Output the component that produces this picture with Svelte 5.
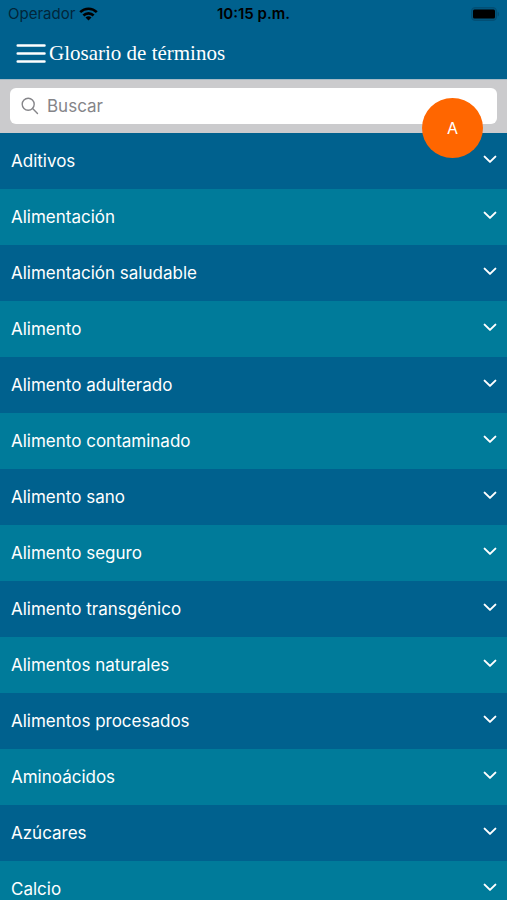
<script>
  const terms = [
    'Aditivos',
    'Alimentación',
    'Alimentación saludable',
    'Alimento',
    'Alimento adulterado',
    'Alimento contaminado',
    'Alimento sano',
    'Alimento seguro',
    'Alimento transgénico',
    'Alimentos naturales',
    'Alimentos procesados',
    'Aminoácidos',
    'Azúcares',
    'Calcio'
  ];

  let query = $state('');
  let open = $state('');

  const shown = $derived(
    terms.filter((term) => term.toLowerCase().includes(query.toLowerCase()))
  );
</script>

<div class="app">
  <header>
    <div class="status">
      <span class="carrier">
        Operador
        <svg width="19" height="14" viewBox="0 0 19 14" aria-hidden="true">
          <g fill="none" stroke="#000" stroke-width="2.6">
            <path d="M1.2 5.1a11.8 11.8 0 0 1 16.6 0" />
            <path d="M4.4 8.5a7.2 7.2 0 0 1 10.2 0" />
          </g>
          <path d="M6.5 10.6a4.3 4.3 0 0 1 6 0L9.5 13.6z" />
        </svg>
      </span>
      <span class="time">10:15 p.m.</span>
      <svg class="battery" width="28" height="14" viewBox="0 0 28 14" aria-hidden="true">
        <rect x="0.5" y="0.5" width="25" height="13" rx="3.5" fill="#02567e" stroke="#024f75" />
        <rect x="2" y="2.5" width="22" height="9" rx="1.5" />
        <path d="M26.6 4.5a2.8 2.8 0 0 1 0 5z" fill="#024f75" />
      </svg>
    </div>
    <div class="bar">
      <button class="menu" aria-label="Menú">
        <svg width="30" height="19" viewBox="0 0 30 19" aria-hidden="true">
          <path d="M1.7 1.5h26.8M1.7 9.5h26.8M1.7 17.5h26.8" stroke="#fff" stroke-width="2.5" stroke-linecap="round" />
        </svg>
      </button>
      <h1>Glosario de términos</h1>
    </div>
  </header>

  <div class="search">
    <label class="field">
      <svg width="18" height="18" viewBox="0 0 18 18" aria-hidden="true">
        <g fill="none" stroke="#858589" stroke-width="1.4" stroke-linecap="round">
          <circle cx="7.2" cy="7.2" r="6" />
          <path d="M11.6 11.6l4.9 4.9" />
        </g>
      </svg>
      <input type="text" placeholder="Buscar" aria-label="Buscar" bind:value={query} />
    </label>
    <button class="letter">A</button>
  </div>

  <ul>
    {#each shown as term (term)}
      <li>
        <button
          class="term"
          aria-expanded={open === term}
          onclick={() => (open = open === term ? '' : term)}
        >
          <span>{term}</span>
          <svg width="14" height="9" viewBox="0 0 14 9" aria-hidden="true">
            <path d="M1.6 1.6L7 6.9l5.4-5.3" fill="none" stroke="#fff" stroke-width="2" stroke-linecap="round" stroke-linejoin="round" />
          </svg>
        </button>
      </li>
    {/each}
  </ul>
</div>

<style>
  .app {
    display: flex;
    flex-direction: column;
    height: 100vh;
    overflow: hidden;
    background: #00618e;
    color: #fff;
    font-family: Inter, 'Liberation Sans', sans-serif;
  }

  button {
    margin: 0;
    padding: 0;
    border: 0;
    background: none;
    color: inherit;
    font: inherit;
    cursor: pointer;
  }

  svg {
    display: block;
    flex: none;
  }

  header {
    flex: none;
    background: #00618e;
  }

  .status {
    display: grid;
    grid-template-columns: 1fr auto 1fr;
    align-items: center;
    height: 27px;
    padding: 0 8px;
    color: #000;
    font-size: 15px;
  }

  .carrier {
    display: flex;
    align-items: center;
    gap: 4px;
    color: #02263a;
  }

  .time {
    font-weight: 600;
  }

  .battery {
    justify-self: end;
  }

  .bar {
    display: flex;
    align-items: center;
    gap: 3px;
    height: 52px;
    padding: 0 16px;
  }

  h1 {
    margin: 0;
    font-family: 'Liberation Serif', serif;
    font-size: 21px;
    font-weight: 400;
    line-height: 24px;
  }

  .search {
    position: relative;
    flex: none;
    padding: 8px 10px 9px;
    border-top: 1px solid #a5bac6;
    background: #cbcbcd;
  }

  .field {
    display: flex;
    align-items: center;
    gap: 8px;
    height: 36px;
    padding: 0 11px;
    border-radius: 6px;
    background: #fff;
  }

  input {
    flex: 1;
    min-width: 0;
    padding: 0;
    border: 0;
    outline: 0;
    background: none;
    color: #222;
    font: inherit;
    font-size: 17px;
  }

  input::placeholder {
    color: #858589;
    opacity: 1;
  }

  .letter {
    position: absolute;
    top: 18px;
    right: 24px;
    width: 61px;
    height: 60px;
    border-radius: 50%;
    background: #ff6600;
    font-size: 16px;
  }

  ul {
    flex: 1;
    min-height: 0;
    margin: 0;
    padding: 0;
    overflow-y: auto;
    scrollbar-width: none;
    list-style: none;
  }

  li:nth-child(even) {
    background: #007b9a;
  }

  .term {
    display: flex;
    align-items: center;
    justify-content: space-between;
    width: 100%;
    height: 56px;
    padding: 0 10px 0 11px;
    font-size: 17px;
    text-align: left;
  }

  .term svg {
    margin-bottom: 3px;
  }
</style>
